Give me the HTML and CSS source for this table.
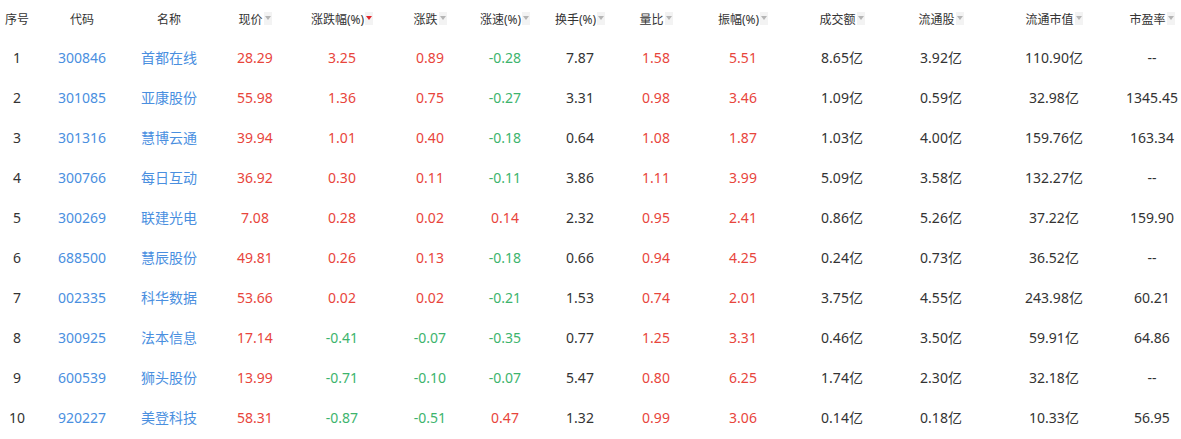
FILE: index.html
```html
<!DOCTYPE html>
<html lang="zh-CN">
<head>
<meta charset="utf-8">
<title>行情</title>
<link rel="stylesheet" href="styles.css">
</head>
<body>
<div class="table">
  <div class="row head">
    <div class="c">序号</div>
    <div class="c">代码</div>
    <div class="c">名称</div>
    <div class="c">现价<i class="sort"></i></div>
    <div class="c">涨跌幅(%)<i class="sort on"></i></div>
    <div class="c">涨跌<i class="sort"></i></div>
    <div class="c">涨速(%)<i class="sort"></i></div>
    <div class="c">换手(%)<i class="sort"></i></div>
    <div class="c">量比<i class="sort"></i></div>
    <div class="c">振幅(%)<i class="sort"></i></div>
    <div class="c">成交额<i class="sort"></i></div>
    <div class="c">流通股<i class="sort"></i></div>
    <div class="c">流通市值<i class="sort"></i></div>
    <div class="c">市盈率<i class="sort"></i></div>
  </div>
  <div class="row">
    <div class="c">1</div><div class="c blue">300846</div><div class="c blue">首都在线</div><div class="c red">28.29</div><div class="c red">3.25</div><div class="c red">0.89</div><div class="c green">-0.28</div><div class="c">7.87</div><div class="c red">1.58</div><div class="c red">5.51</div><div class="c">8.65亿</div><div class="c">3.92亿</div><div class="c">110.90亿</div><div class="c">--</div>
  </div>
  <div class="row">
    <div class="c">2</div><div class="c blue">301085</div><div class="c blue">亚康股份</div><div class="c red">55.98</div><div class="c red">1.36</div><div class="c red">0.75</div><div class="c green">-0.27</div><div class="c">3.31</div><div class="c red">0.98</div><div class="c red">3.46</div><div class="c">1.09亿</div><div class="c">0.59亿</div><div class="c">32.98亿</div><div class="c">1345.45</div>
  </div>
  <div class="row">
    <div class="c">3</div><div class="c blue">301316</div><div class="c blue">慧博云通</div><div class="c red">39.94</div><div class="c red">1.01</div><div class="c red">0.40</div><div class="c green">-0.18</div><div class="c">0.64</div><div class="c red">1.08</div><div class="c red">1.87</div><div class="c">1.03亿</div><div class="c">4.00亿</div><div class="c">159.76亿</div><div class="c">163.34</div>
  </div>
  <div class="row">
    <div class="c">4</div><div class="c blue">300766</div><div class="c blue">每日互动</div><div class="c red">36.92</div><div class="c red">0.30</div><div class="c red">0.11</div><div class="c green">-0.11</div><div class="c">3.86</div><div class="c red">1.11</div><div class="c red">3.99</div><div class="c">5.09亿</div><div class="c">3.58亿</div><div class="c">132.27亿</div><div class="c">--</div>
  </div>
  <div class="row">
    <div class="c">5</div><div class="c blue">300269</div><div class="c blue">联建光电</div><div class="c red">7.08</div><div class="c red">0.28</div><div class="c red">0.02</div><div class="c red">0.14</div><div class="c">2.32</div><div class="c red">0.95</div><div class="c red">2.41</div><div class="c">0.86亿</div><div class="c">5.26亿</div><div class="c">37.22亿</div><div class="c">159.90</div>
  </div>
  <div class="row">
    <div class="c">6</div><div class="c blue">688500</div><div class="c blue">慧辰股份</div><div class="c red">49.81</div><div class="c red">0.26</div><div class="c red">0.13</div><div class="c green">-0.18</div><div class="c">0.66</div><div class="c red">0.94</div><div class="c red">4.25</div><div class="c">0.24亿</div><div class="c">0.73亿</div><div class="c">36.52亿</div><div class="c">--</div>
  </div>
  <div class="row">
    <div class="c">7</div><div class="c blue">002335</div><div class="c blue">科华数据</div><div class="c red">53.66</div><div class="c red">0.02</div><div class="c red">0.02</div><div class="c green">-0.21</div><div class="c">1.53</div><div class="c red">0.74</div><div class="c red">2.01</div><div class="c">3.75亿</div><div class="c">4.55亿</div><div class="c">243.98亿</div><div class="c">60.21</div>
  </div>
  <div class="row">
    <div class="c">8</div><div class="c blue">300925</div><div class="c blue">法本信息</div><div class="c red">17.14</div><div class="c green">-0.41</div><div class="c green">-0.07</div><div class="c green">-0.35</div><div class="c">0.77</div><div class="c red">1.25</div><div class="c red">3.31</div><div class="c">0.46亿</div><div class="c">3.50亿</div><div class="c">59.91亿</div><div class="c">64.86</div>
  </div>
  <div class="row">
    <div class="c">9</div><div class="c blue">600539</div><div class="c blue">狮头股份</div><div class="c red">13.99</div><div class="c green">-0.71</div><div class="c green">-0.10</div><div class="c green">-0.07</div><div class="c">5.47</div><div class="c red">0.80</div><div class="c red">6.25</div><div class="c">1.74亿</div><div class="c">2.30亿</div><div class="c">32.18亿</div><div class="c">--</div>
  </div>
  <div class="row">
    <div class="c">10</div><div class="c blue">920227</div><div class="c blue">美登科技</div><div class="c red">58.31</div><div class="c green">-0.87</div><div class="c green">-0.51</div><div class="c red">0.47</div><div class="c">1.32</div><div class="c red">0.99</div><div class="c red">3.06</div><div class="c">0.14亿</div><div class="c">0.18亿</div><div class="c">10.33亿</div><div class="c">56.95</div>
  </div>
</div>
</body>
</html>
```
FILE: styles.css
```css
html, body {
  margin: 0;
  padding: 0;
  background: #fff;
}
body {
  font-family: "Noto Sans", "Noto Sans CJK SC", sans-serif;
  color: #333;
}
.table {
  width: 1181px;
}
.row {
  display: grid;
  grid-template-columns: 49px 66px 108px 64px 110px 66px 84px 66px 86px 88px 110px 88px 138px 58px;
  height: 40px;
  align-items: center;
  font-size: 14px;
}
.row.head {
  height: 37px;
  font-size: 12px;
}
.c {
  text-align: center;
  white-space: nowrap;
  display: flex;
  justify-content: center;
  align-items: center;
}
.row .c:first-child {
  padding-right: 15px;
}
.blue { color: #4a8fdf; }
.red { color: #e8453c; }
.green { color: #3db46d; }
.sort {
  display: inline-flex;
  justify-content: center;
  width: 8px;
  height: 13px;
  margin-left: 1px;
  background: #f3f3f3;
}
.sort::before {
  content: "";
  margin-top: 4px;
  width: 0;
  height: 0;
  border-left: 3.5px solid transparent;
  border-right: 3.5px solid transparent;
  border-top: 4px solid #b5b5b5;
}
.sort.on::before {
  border-top-color: #e0252b;
}
```
